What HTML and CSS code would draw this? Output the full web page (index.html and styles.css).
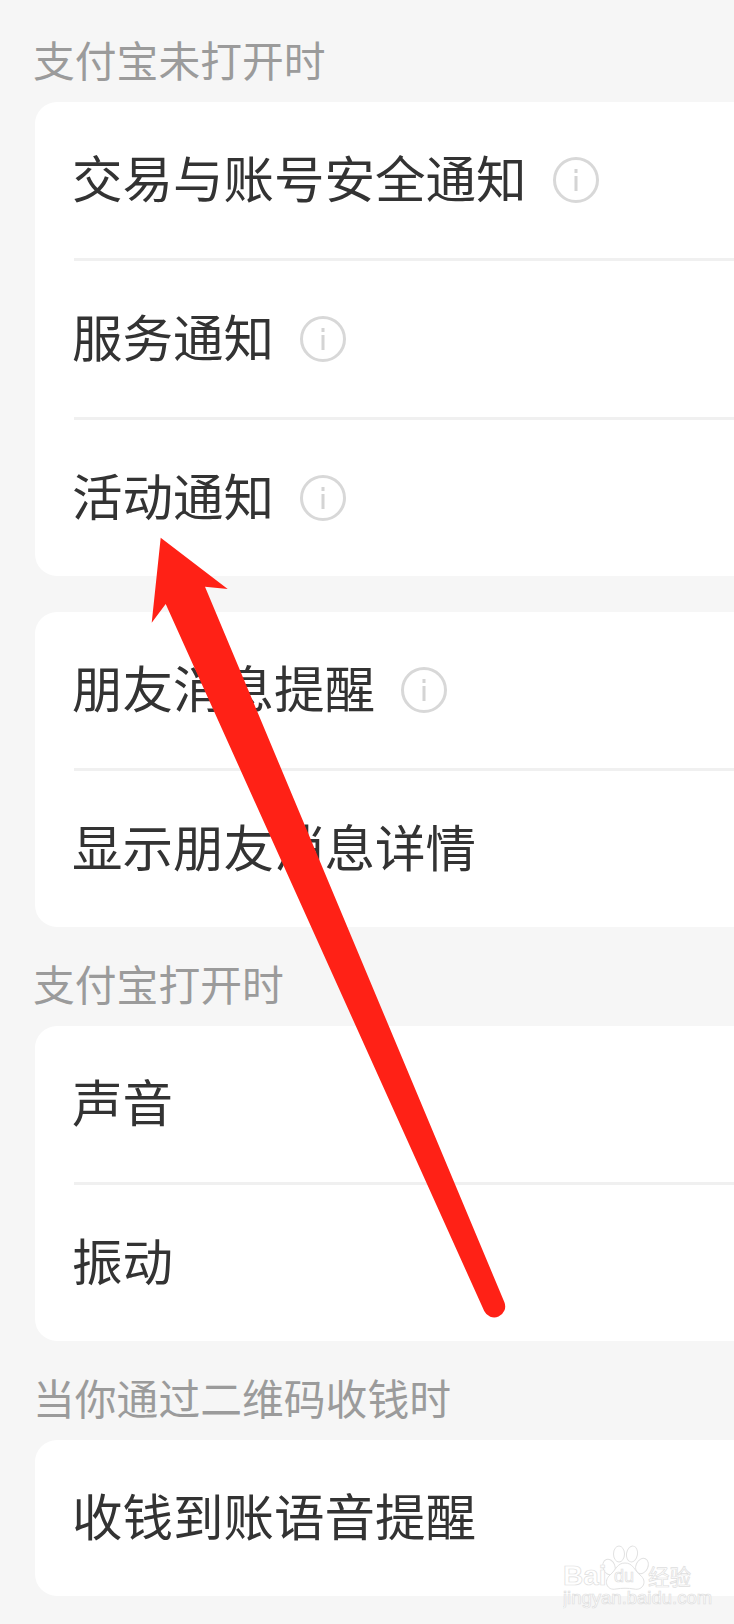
FILE: index.html
```html
<!DOCTYPE html>
<html>
<head>
	<meta charset="utf-8">
	<meta name="viewport" content="width=device-width, initial-scale=1">
	<title>通知设置</title>
	<link rel="stylesheet" href="styles.css">
</head>
<body>
	<div class="page">
		<div class="title first">支付宝未打开时</div>
		<div class="card">
			<div class="row"><span class="label">交易与账号安全通知</span><svg class="info" viewBox="0 0 48 48"><circle cx="24" cy="24" r="21.5"/><rect class="dot" x="22.5" y="13" width="3" height="4"/><rect class="dot" x="22.5" y="20" width="3" height="15"/></svg></div>
			<div class="line"></div>
			<div class="row"><span class="label">服务通知</span><svg class="info" viewBox="0 0 48 48"><circle cx="24" cy="24" r="21.5"/><rect class="dot" x="22.5" y="13" width="3" height="4"/><rect class="dot" x="22.5" y="20" width="3" height="15"/></svg></div>
			<div class="line"></div>
			<div class="row"><span class="label">活动通知</span><svg class="info" viewBox="0 0 48 48"><circle cx="24" cy="24" r="21.5"/><rect class="dot" x="22.5" y="13" width="3" height="4"/><rect class="dot" x="22.5" y="20" width="3" height="15"/></svg></div>
		</div>
		<div class="card next">
			<div class="row"><span class="label">朋友消息提醒</span><svg class="info" viewBox="0 0 48 48"><circle cx="24" cy="24" r="21.5"/><rect class="dot" x="22.5" y="13" width="3" height="4"/><rect class="dot" x="22.5" y="20" width="3" height="15"/></svg></div>
			<div class="line"></div>
			<div class="row"><span class="label">显示朋友消息详情</span></div>
		</div>
		<div class="title">支付宝打开时</div>
		<div class="card">
			<div class="row"><span class="label">声音</span></div>
			<div class="line"></div>
			<div class="row"><span class="label">振动</span></div>
		</div>
		<div class="title">当你通过二维码收钱时</div>
		<div class="card">
			<div class="row"><span class="label">收钱到账语音提醒</span></div>
		</div>
	</div>

	<!-- red arrow drawn over the screenshot -->
	<svg class="arrow" viewBox="0 0 734 1624">
		<path d="M160.7 537.7 L227.7 589 L205 586.7 L504.4 1302.3 A11 11 0 0 1 484.2 1311 L165.7 604 L151.7 622.7 Z"/>
	</svg>

	<!-- watermark -->
	<svg class="mark" viewBox="0 0 150 70">
		<g class="paw">
			<ellipse cx="46" cy="22" rx="6" ry="8" transform="rotate(-20 46 22)"/>
			<ellipse cx="56" cy="9" rx="5.5" ry="8"/>
			<ellipse cx="69" cy="9" rx="5.5" ry="8" transform="rotate(10 69 9)"/>
			<ellipse cx="79" cy="21" rx="6" ry="8" transform="rotate(25 79 21)"/>
			<path d="M62 18 C70 18 71 25 77 30 C85 36 80 46 71 44 C65 43 59 43 53 44 C44 46 40 36 47 30 C53 25 54 18 62 18 Z"/>
		</g>
		<text class="mark-big" x="0" y="40">Bai</text>
		<text class="mark-du" x="51" y="37">du</text>
		<text class="mark-cn" x="85" y="40">经验</text>
		<text class="mark-url" x="0" y="59">jingyan.baidu.com</text>
	</svg>
</body>
</html>
```

FILE: styles.css
```css
html, body {
	margin: 0;
	height: 1624px;
	overflow: hidden;
	background-color: #f6f6f6;
}
body {
	position: relative;
	font-family: "Noto Sans CJK SC", "Noto Sans", sans-serif;
}
.page {
	padding-left: 35px;
}
.title {
	height: 99px;
	box-sizing: border-box;
	padding-top: 34px;
	margin-left: -2px;
	font-size: 41.8px;
	line-height: 44px;
	color: #9b9b9b;
}
.title.first {
	height: 102px;
	padding-top: 37px;
}
.card {
	background-color: #fff;
	border-radius: 22px 0 0 22px;
	padding-left: 39px;
}
.card.next {
	margin-top: 36px;
}
.row {
	height: 156px;
	display: flex;
	align-items: center;
	font-size: 50.5px;
	color: #333;
}
.label {
	margin-left: -2px;
	margin-bottom: 8px;
}
.line {
	height: 3px;
	background-color: #f0f0f0;
}
.info {
	width: 48px;
	height: 48px;
	margin-left: 25px;
}
.info circle {
	fill: none;
	stroke: #d8d8d8;
	stroke-width: 3;
}
.info .dot {
	fill: #d4d4d4;
}
.arrow {
	position: absolute;
	left: 0;
	top: 0;
	width: 734px;
	height: 1624px;
}
.arrow path {
	fill: #ff2116;
}
.mark {
	position: absolute;
	left: 563px;
	top: 1545px;
	width: 150px;
	height: 70px;
}
.paw ellipse, .paw path {
	fill: #fff;
	stroke: #e2e2e2;
	stroke-width: 1;
}
.mark text {
	fill: #fff;
	stroke: #dedede;
	stroke-width: 0.7;
	font-family: "Liberation Sans", sans-serif;
}
.mark-big {
	font-size: 28px;
	font-weight: bold;
}
.mark-du {
	font-size: 18px;
}
.mark text.mark-cn {
	font-family: "Noto Sans CJK SC", sans-serif;
	font-size: 21.5px;
}
.mark-url {
	font-size: 18.5px;
}
```
